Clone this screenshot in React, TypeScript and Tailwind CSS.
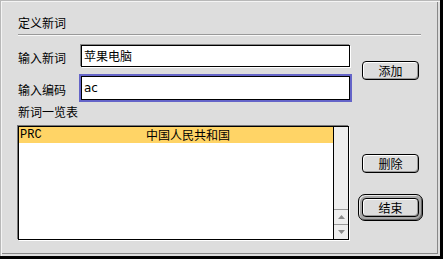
import React from "react";

const cjk = { fontFamily: '"Noto Sans CJK SC", "Noto Sans", sans-serif' };

function MacButton({ label }: { label: string }) {
  return (
    <div
      className="w-[57px] h-[19px] rounded-[4px] border border-black bg-[#dddddd] shadow-[inset_1px_1px_0_#ffffff,inset_-1px_-1px_0_#999999] flex items-center justify-center text-[12px] leading-[14px] text-black"
      style={cjk}
    >
      {label}
    </div>
  );
}

export default function App() {
  return (
    <div className="w-[443px] h-[259px] bg-black">
      <div className="w-[440px] h-[256px] bg-[#dddddd] border-t border-l border-[#b8b8b8] shadow-[inset_1px_1px_0_#f4f4f4,inset_-2px_-2px_0_#dddddd,inset_-3px_-3px_0_#888888] pl-[17px] pt-[15px]">
        <div className="text-[12px] leading-[14px] text-black" style={cjk}>
          定义新词
        </div>
        <div className="mt-[4px] w-[403px] h-[2px] border-t border-[#999999] border-b border-b-[#f8f8f8]" />
        <div className="flex mt-[9px]">
          {/* left column */}
          <div className="w-[332px] flex flex-col">
            <div className="flex items-center h-[22px]">
              <div className="w-[63px] text-[12px] leading-[14px] text-black pt-[3px]" style={cjk}>
                输入新词
              </div>
              <div className="w-[269px] h-[22px] bg-white border border-black shadow-[-1px_-1px_0_#888888,1px_1px_0_#ffffff] pl-[2px] flex items-center text-[12px] leading-[14px] text-black" style={cjk}>
                苹果电脑
              </div>
            </div>
            <div className="flex items-center h-[24px] mt-[9px]">
              <div className="w-[63px] text-[12px] leading-[14px] text-black pt-[3px]" style={cjk}>
                输入编码
              </div>
              <div className="w-[269px] h-[24px] bg-white border border-black shadow-[0_0_0_2px_#6464c8] pl-[2px] flex items-center text-[12px] leading-[14px] text-black" style={{ fontFamily: '"DejaVu Sans", "Noto Sans CJK SC", sans-serif' }}>
                ac
              </div>
            </div>
            <div className="mt-[5px] text-[12px] leading-[14px] text-black" style={cjk}>
              新词一览表
            </div>
            <div className="mt-[7px] w-[331px] h-[114px] bg-white border border-black shadow-[-1px_-1px_0_#777777,1px_1px_0_#ffffff] flex">
              <div className="flex-1 flex flex-col">
                <div className="h-[16px] bg-[#ffd466] flex items-center text-[12px] leading-[14px] text-black">
                  <span className="w-[127px] pl-[1px]" style={{ fontFamily: '"Liberation Mono", monospace' }}>
                    PRC
                  </span>
                  <span style={cjk}>中国人民共和国</span>
                </div>
              </div>
              <div className="w-[15px] border-l border-black bg-[#eeeeee] flex flex-col">
                <div className="flex-1" />
                <div className="h-[15px] border-t border-[#999999] flex items-center justify-center">
                  <svg width="7" height="4" viewBox="0 0 7 4">
                    <polygon points="3.5,0 7,4 0,4" fill="#8a8a8a" />
                  </svg>
                </div>
                <div className="h-[15px] border-t border-[#999999] flex items-center justify-center">
                  <svg width="7" height="4" viewBox="0 0 7 4">
                    <polygon points="0,0 7,0 3.5,4" fill="#8a8a8a" />
                  </svg>
                </div>
              </div>
            </div>
          </div>
          {/* right column */}
          <div className="ml-[8px] flex flex-col">
            <div className="mt-[16px] ml-[4px]">
              <MacButton label="添加" />
            </div>
            <div className="mt-[74px] ml-[4px]">
              <MacButton label="删除" />
            </div>
            <div className="mt-[21px] w-[65px] h-[27px] rounded-[7px] border border-black bg-[#a8a8a8] shadow-[inset_1px_1px_0_#e8e8e8,inset_-1px_-1px_0_#666666] p-[3px]">
              <MacButton label="结束" />
            </div>
          </div>
        </div>
      </div>
    </div>
  );
}
